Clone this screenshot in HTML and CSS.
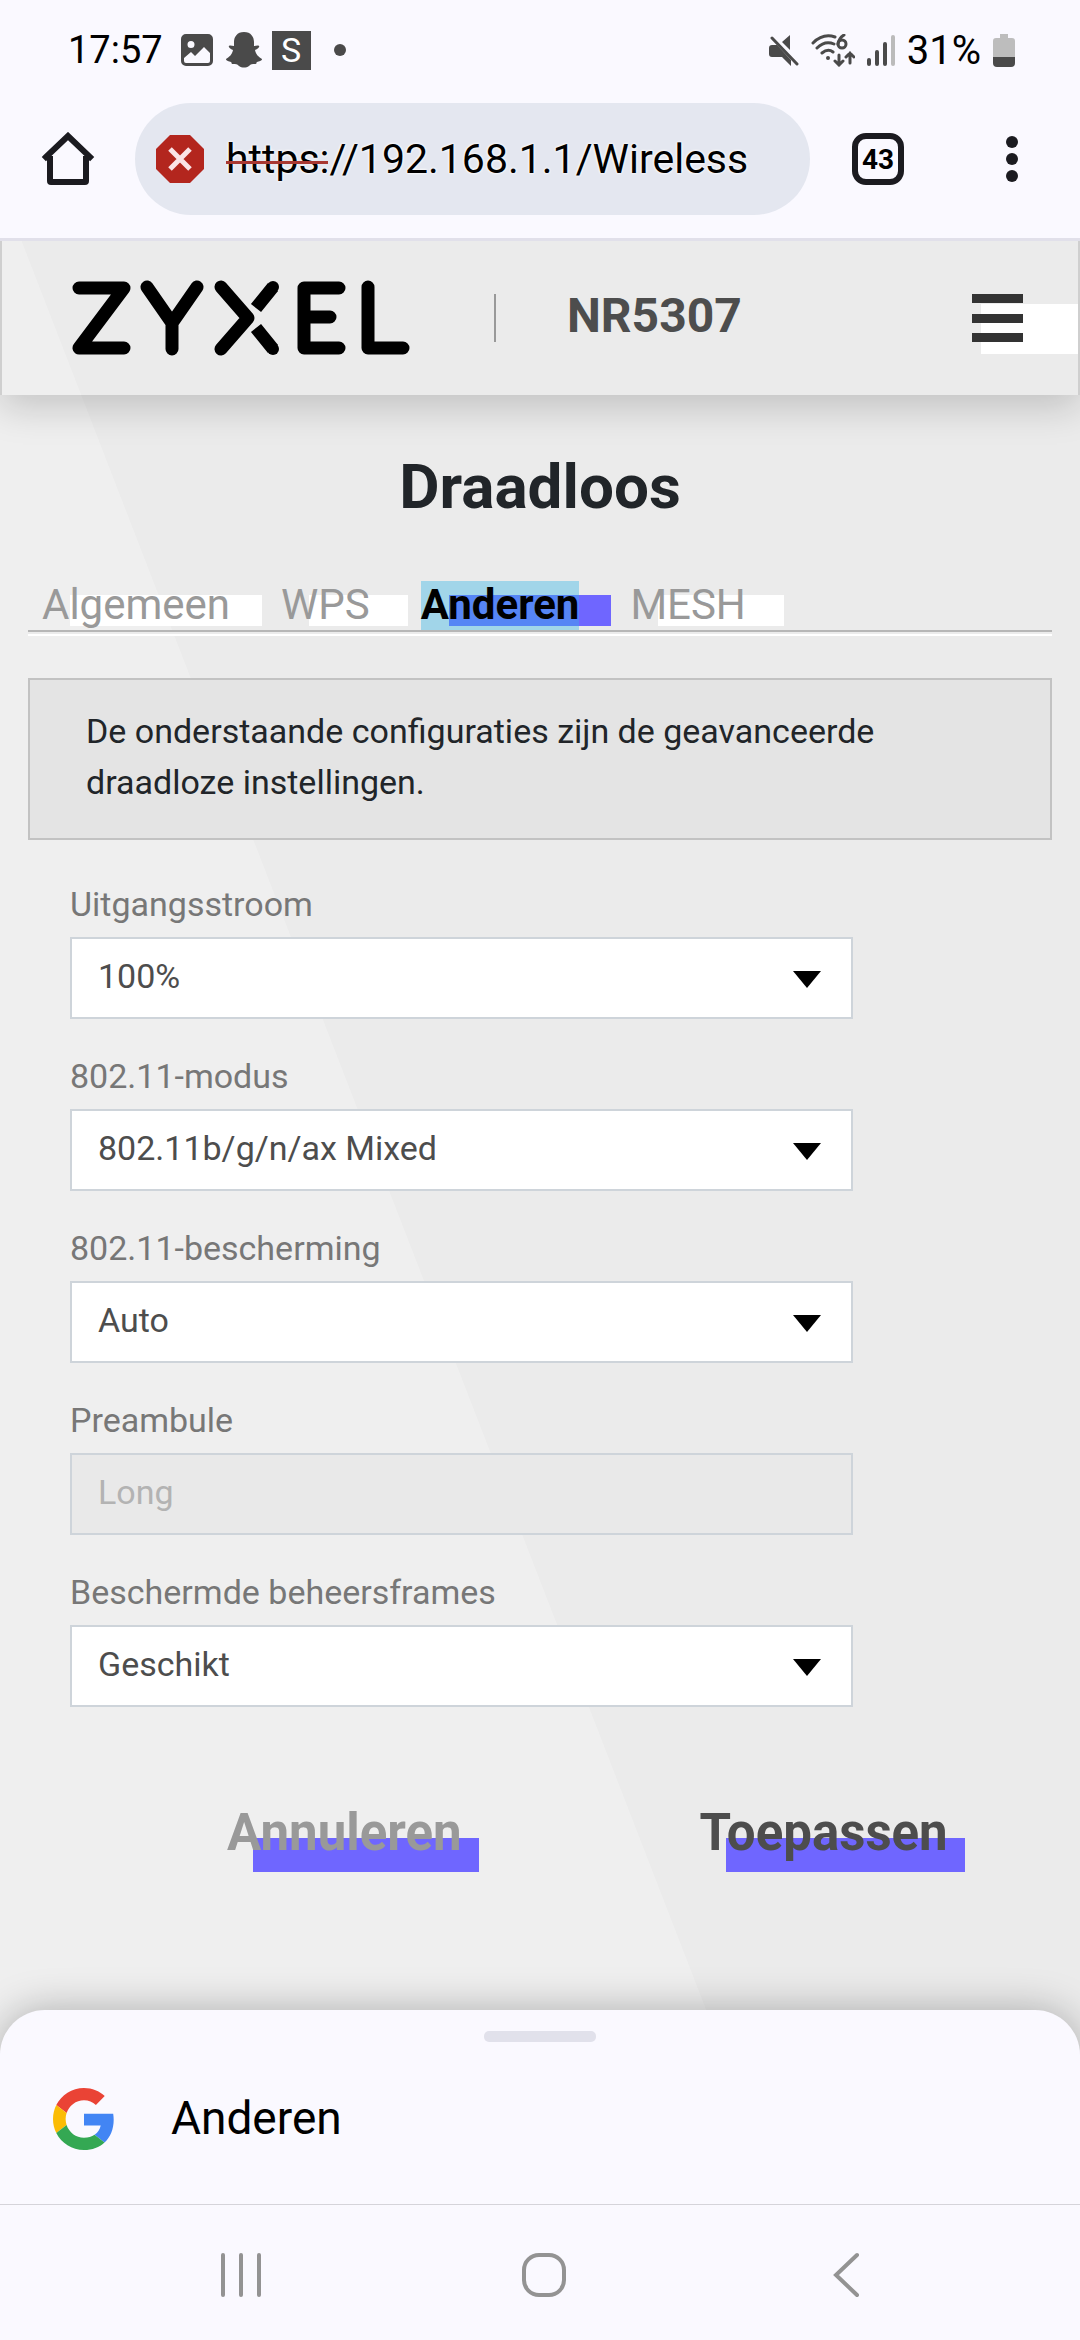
FILE: index.html
```html
<!DOCTYPE html>
<html lang="nl">
  <head>
    <meta charset="UTF-8" />
    <meta name="viewport" content="width=device-width, initial-scale=1.0" />
    <title>Draadloos</title>
    <link rel="stylesheet" href="styles.css">
  </head>

  <body>
    <!-- status bar -->
    <div class="status">
      <span class="clock">17:57</span>
      <svg class="icoImage" width="32" height="32" viewBox="0 0 32 32">
        <path fill="#4a4a4a" fill-rule="evenodd" d="M5 0h22a5 5 0 0 1 5 5v22a5 5 0 0 1-5 5H5a5 5 0 0 1-5-5V5a5 5 0 0 1 5-5zM10 7a3.500 3.500 0 1 0 0 7a3.500 3.500 0 1 0 0-7zM3 24v3q0 2 2 2h22q2 0 2-2V19l-6-6l-9 9l-4-4z" />
      </svg>
      <svg class="icoGhost" width="36" height="36" viewBox="0 0 36 36">
        <path fill="#4a4a4a" d="M18 0c7 0 10 5 10 10v4c2 0 4-1 5 0s-1 3-4 4c1 5 4 7 7 9c0 2-3 2-5 3c-1 1 0 2-2 2c-3 0-4 0-6 2c-3 2-7 2-10 0c-2-2-3-2-6-2c-2 0-1-1-2-2c-2-1-5-1-5-3c3-2 6-4 7-9c-3-1-5-3-4-4s3 0 5 0v-4c0-5 3-10 10-10z" />
      </svg>
      <span class="icoS">S</span>
      <span class="dot"></span>
      <div class="statusRight">
        <svg width="30" height="31" viewBox="0 0 30 31">
          <path fill="#4a4a4a" d="M3 10h5l14 15v6l-9-9H3q-3 0-3-3v-6q0-3 3-3zM13 7l8-7v15z" />
          <path stroke="#4a4a4a" stroke-width="3" stroke-linecap="round" d="M3 3L28 29" />
        </svg>
        <svg width="44" height="33" viewBox="0 0 44 33" fill="none" stroke="#4a4a4a" stroke-width="3" stroke-linecap="round">
          <path d="M2 9Q12-1 24 3M6 14Q14 6 23 10M11 19Q17 14 22 18" />
          <circle cx="17" cy="24" r="2" fill="#4a4a4a" stroke="none" />
          <circle cx="31" cy="10" r="4" />
          <path d="M33 1Q28 4 27 10M28 21v10M24 27l4 4l4-4M39 29V19M35 23l4-4l4 4" />
        </svg>
        <svg width="28" height="31" viewBox="0 0 28 31" stroke="#4a4a4a" stroke-width="4" stroke-linecap="round">
          <path d="M2 25v4M10 17v12M18 9v20" />
          <path stroke="#bbb" d="M26 2v27" />
        </svg>
        <span class="percent">31%</span>
        <svg width="22" height="33" viewBox="0 0 22 33">
          <path fill="#bdbdbd" d="M7 0h8v4h4q3 0 3 3v17H0V7q0-3 3-3h4z" />
          <path fill="#4a4a4a" d="M0 23h22v6q0 4-4 4H4q-4 0-4-4z" />
        </svg>
      </div>
    </div>

    <!-- browser bar -->
    <div class="browser">
      <button class="iconBtn" aria-label="Home">
        <svg width="54" height="54" viewBox="0 0 54 54" fill="none" stroke="#1b1b20" stroke-width="6">
          <path stroke-linecap="square" d="M5 25L27 4L49 25" />
          <path stroke-linejoin="round" d="M9 24V49q0 1 1 1H44q1 0 1-1V24" />
        </svg>
      </button>
      <div class="urlBar">
        <svg width="48" height="48" viewBox="0 0 48 48">
          <path fill="#b3261e" d="M14 0h20l14 14v20L34 48H14L0 34V14z" />
          <path stroke="#fbe3e6" stroke-width="5" d="M14 14l20 20M34 14L14 34" />
        </svg>
        <div class="urlWrap">
          <input class="url" type="text" value="https://192.168.1.1/Wireless" aria-label="URL" />
          <span class="strike"></span>
        </div>
      </div>
      <button class="tabCount">43</button>
      <button class="iconBtn" aria-label="Menu">
        <svg width="12" height="48" viewBox="0 0 12 48" fill="#1b1b20">
          <circle cx="6" cy="7" r="6" />
          <circle cx="6" cy="24" r="6" />
          <circle cx="6" cy="41" r="6" />
        </svg>
      </button>
    </div>

    <!-- router page -->
    <div class="router">
      <header class="header">
        <svg class="logo" width="338" height="76" viewBox="0 0 338 76" fill="none" stroke="#000" stroke-width="13" stroke-linecap="round" stroke-linejoin="round" role="img" aria-label="ZYXEL">
          <path d="M7 8H52L7 68H52" />
          <path d="M75 7L100 43L125 7M100 43V69" />
          <path d="M149 7L176 38L149 69" />
          <path stroke-linecap="butt" d="M201 7L184 28M201 69L184 48" />
          <circle cx="201" cy="7" r="6" fill="#000" stroke="none" />
          <circle cx="201" cy="69" r="6" fill="#000" stroke="none" />
          <path d="M267 8H232V68H267M232 37H258" />
          <path d="M296 7V68H331" />
        </svg>
        <span class="divider"></span>
        <span class="model">NR5307</span>
        <button class="menuBtn" aria-label="Menu">
          <span></span>
          <span></span>
          <span></span>
        </button>
      </header>

      <main class="content">
        <h1 class="title">Draadloos</h1>
        <nav class="tabs">
          <a class="tab" href="#">Algemeen</a>
          <a class="tab caps" href="#">WPS</a>
          <a class="tab active" href="#">Anderen</a>
          <a class="tab caps" href="#">MESH</a>
        </nav>
        <p class="info">De onderstaande configuraties zijn de geavanceerde draadloze instellingen.</p>

        <form class="form">
          <div class="field">
            <label for="power">Uitgangsstroom</label>
            <div class="selectBox">
              <select id="power"><option>100%</option></select>
            </div>
          </div>
          <div class="field">
            <label for="mode">802.11-modus</label>
            <div class="selectBox">
              <select id="mode"><option>802.11b/g/n/ax Mixed</option></select>
            </div>
          </div>
          <div class="field">
            <label for="protection">802.11-bescherming</label>
            <div class="selectBox">
              <select id="protection"><option>Auto</option></select>
            </div>
          </div>
          <div class="field">
            <label for="preamble">Preambule</label>
            <div class="selectBox disabled">
              <select id="preamble" disabled><option>Long</option></select>
            </div>
          </div>
          <div class="field">
            <label for="frames">Beschermde beheersframes</label>
            <div class="selectBox">
              <select id="frames"><option>Geschikt</option></select>
            </div>
          </div>
          <div class="actions">
            <button class="action cancel" type="button">Annuleren</button>
            <button class="action" type="button">Toepassen</button>
          </div>
        </form>
      </main>
    </div>

    <!-- search sheet -->
    <div class="sheet">
      <span class="handle"></span>
      <div class="sheetRow">
        <svg width="62" height="62" viewBox="0 0 48 48">
          <path fill="#ea4335" d="M24 9.500c3.540 0 6.710 1.220 9.210 3.600l6.850-6.850C35.900 2.380 30.470 0 24 0 14.620 0 6.510 5.380 2.560 13.220l7.980 6.190C12.430 13.720 17.740 9.500 24 9.500z" />
          <path fill="#4285f4" d="M46.980 24.550c0-1.570-.15-3.090-.38-4.550H24v9.020h12.940c-.58 2.960-2.260 5.480-4.780 7.180l7.730 6c4.510-4.180 7.090-10.360 7.090-17.650z" />
          <path fill="#fbbc05" d="M10.530 28.590c-.48-1.450-.76-2.990-.76-4.590s.27-3.140.76-4.590l-7.980-6.190C.92 16.460 0 20.120 0 24c0 3.880.92 7.540 2.560 10.780l7.970-6.190z" />
          <path fill="#34a853" d="M24 48c6.480 0 11.930-2.130 15.890-5.810l-7.730-6c-2.150 1.450-4.920 2.300-8.160 2.300-6.260 0-11.570-4.220-13.470-9.910l-7.980 6.190C6.510 42.620 14.620 48 24 48z" />
        </svg>
        <span class="sheetText">Anderen</span>
      </div>
    </div>

    <!-- navigation keys -->
    <div class="keys">
      <button class="iconBtn" aria-label="Recent">
        <svg width="48" height="48" viewBox="0 0 48 48" stroke="#939393" stroke-width="4" stroke-linecap="round">
          <path d="M6 4v40M24 4v40M42 4v40" />
        </svg>
      </button>
      <button class="iconBtn" aria-label="Home">
        <svg width="48" height="48" viewBox="0 0 48 48" fill="none" stroke="#939393" stroke-width="4">
          <rect x="4" y="4" width="40" height="40" rx="15" />
        </svg>
      </button>
      <button class="iconBtn" aria-label="Terug">
        <svg width="48" height="48" viewBox="0 0 48 48" fill="none" stroke="#939393" stroke-width="4" stroke-linecap="round">
          <path d="M35 4L14 24L35 44" />
        </svg>
      </button>
    </div>
  </body>
</html>
```
FILE: styles.css
```css
* {
  box-sizing: border-box;
}

body {
  margin: 0;
  min-height: 100vh;
  display: flex;
  flex-direction: column;
  background: #faf9ff;
  font-family: Roboto, "Liberation Sans", sans-serif;
}

button {
  background: transparent;
  border: none;
  padding: 0;
  font-family: inherit;
}

svg {
  display: block;
  flex-shrink: 0;
}

/* status bar */
.status {
  display: flex;
  align-items: center;
  height: 100px;
  padding: 0 65px 0 68px;
}

.clock {
  font-size: 38px;
  color: #000;
}

.percent {
  font-size: 40px;
  color: #000;
}

.icoImage {
  margin-left: 18px;
}

.icoGhost {
  margin-left: 13px;
}

.icoS {
  width: 39px;
  height: 39px;
  margin-left: 10px;
  background: #4a4a4a;
  color: #fff;
  font-size: 34px;
  line-height: 39px;
  text-align: center;
}

.dot {
  width: 12px;
  height: 12px;
  margin-left: 23px;
  border-radius: 50%;
  background: #4a4a4a;
}

.statusRight {
  display: flex;
  align-items: center;
  gap: 12px;
  margin-left: auto;
}

/* browser bar */
.browser {
  display: flex;
  align-items: center;
  height: 141px;
  padding: 3px 62px 23px 41px;
  border-bottom: 3px solid #e1e0ea;
}

.urlBar {
  flex: 1;
  display: flex;
  align-items: center;
  height: 112px;
  margin: 0 42px 0 40px;
  padding-left: 21px;
  border-radius: 56px;
  background: #e4e7f0;
}

.urlWrap {
  position: relative;
  flex: 1;
  margin-left: 22px;
}

.url {
  display: block;
  width: 100%;
  border: none;
  padding: 0;
  background: transparent;
  color: #000;
  font-family: inherit;
  font-size: 41px;
  line-height: 52px;
  text-shadow: 0 0 3px #fff, 0 0 3px #fff;
}

.strike {
  position: absolute;
  left: 0;
  top: 28px;
  width: 102px;
  height: 3px;
  background: #a83832;
}

.tabCount {
  width: 52px;
  height: 52px;
  margin-right: 102px;
  border: 6px solid #1b1b20;
  border-radius: 14px;
  color: #000;
  font-size: 28px;
  font-weight: bold;
}

/* router page */
.router {
  position: relative;
  z-index: 0;
  flex: 1;
  background: #ebebeb;
}

.router::before {
  content: "";
  position: absolute;
  inset: 0;
  z-index: -1;
  background: #efefef;
  clip-path: polygon(0 0, 2% 0, 67% 100%, 0 100%);
}

.header {
  display: flex;
  align-items: center;
  height: 154px;
  padding-left: 70px;
  border-left: 2px solid #cfcfcf;
  border-right: 2px solid #cfcfcf;
  box-shadow: 0 12px 36px rgba(0, 0, 0, 0.18);
  clip-path: inset(0 0 -60px 0);
}

.divider {
  width: 2px;
  height: 48px;
  margin-left: 84px;
  background: #999;
}

.model {
  margin-left: 71px;
  padding-bottom: 5px;
  color: #4d4d4d;
  font-size: 48px;
  font-weight: bold;
}

.menuBtn {
  position: relative;
  z-index: 0;
  width: 51px;
  height: 48px;
  margin-left: auto;
  margin-right: 55px;
  display: flex;
  flex-direction: column;
  justify-content: space-between;
}

.menuBtn::before {
  content: "";
  position: absolute;
  z-index: -1;
  left: 9px;
  right: -55px;
  top: 10px;
  bottom: -12px;
  background: #fff;
}

.menuBtn span {
  width: 100%;
  height: 9px;
  background: #333;
}

.content {
  padding: 56px 28px 130px;
}

.title {
  margin: 0 0 58px;
  color: #212529;
  font-size: 62px;
  line-height: 72px;
  text-align: center;
}

.tabs {
  display: flex;
  gap: 51px;
  height: 55px;
  padding-left: 14px;
  border-bottom: 2px solid #fff;
  box-shadow: inset 0 -2px #ebebeb, inset 0 -4px #b6b6b6;
}

.tab {
  position: relative;
  z-index: 0;
  height: 49px;
  color: #999;
  font-size: 42px;
  line-height: 48px;
  text-decoration: none;
}

/* block behind the words */
.tab::before,
.action::before {
  content: "";
  position: absolute;
  z-index: -2;
  left: 28px;
  right: -32px;
  top: 14px;
  bottom: 4px;
  background: #fff;
}

.tab.caps::before {
  right: -38px;
}

.tab.active {
  color: #000;
  font-weight: bold;
}

.tab.active::before {
  background: #6f66ff;
}

.tab.active::after {
  content: "";
  position: absolute;
  z-index: -1;
  inset: 0;
  background: rgba(51, 181, 229, 0.4);
}

.info {
  margin: 42px 0 39px;
  padding: 26px 56px 30px;
  border: 2px solid #c2c2c2;
  background: #e4e4e4;
  color: #212529;
  font-size: 34px;
  line-height: 51px;
}

.form {
  padding: 0 42px;
}

.field {
  width: calc(100% * 10 / 12);
  margin-bottom: 32px;
}

.field label {
  display: block;
  margin-bottom: 7px;
  color: #777;
  font-size: 34px;
  line-height: 51px;
}

.selectBox {
  position: relative;
}

.selectBox::after {
  content: "";
  position: absolute;
  right: 32px;
  top: 34px;
  border: 14px solid transparent;
  border-top: 17px solid #000;
  border-bottom: none;
  pointer-events: none;
}

.selectBox.disabled::after {
  display: none;
}

.selectBox select {
  appearance: none;
  display: block;
  width: 100%;
  height: 82px;
  padding: 0 70px 4px 26px;
  border: 2px solid #ced4da;
  border-radius: 0;
  background: #fff;
  color: #4d4d4d;
  font-family: inherit;
  font-size: 34px;
}

.selectBox select:disabled {
  background: #e9e9e9;
  color: #b3b3b3;
  opacity: 1;
}

.actions {
  display: flex;
  gap: 238px;
  margin-top: 96px;
  padding-left: 157px;
}

.action {
  position: relative;
  z-index: 0;
  color: #4d4d4d;
  font-size: 51px;
  font-weight: bold;
  line-height: 60px;
}

.action::before {
  left: 26px;
  right: -17px;
  top: 35px;
  bottom: -9px;
  background: #6f66ff;
}

.action.cancel {
  color: #999;
}

/* search sheet */
.sheet {
  position: relative;
  z-index: 1;
  height: 194px;
  margin-top: -45px;
  padding-top: 21px;
  border-radius: 45px 45px 0 0;
  background: #faf9ff;
  box-shadow: 0 0 40px rgba(0, 0, 0, 0.28);
}

.handle {
  display: block;
  width: 112px;
  height: 11px;
  margin: 0 auto;
  border-radius: 5px;
  background: #e1e1eb;
}

.sheetRow {
  display: flex;
  align-items: center;
  margin-top: 46px;
  padding-left: 53px;
}

.sheetText {
  margin-left: 56px;
  padding-bottom: 2px;
  font-size: 46px;
}

.keys {
  position: relative;
  z-index: 1;
  display: flex;
  align-items: center;
  justify-content: space-between;
  height: 136px;
  padding: 4px 210px 0 217px;
  border-top: 1px solid #d5d4da;
  background: #faf9ff;
}
```
